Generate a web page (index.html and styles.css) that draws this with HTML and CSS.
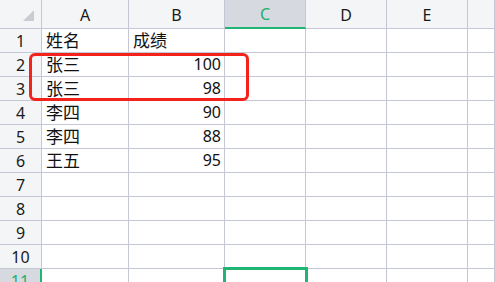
FILE: index.html
```html
<!DOCTYPE html>
<html lang="zh-CN">
<head>
    <meta charset="UTF-8" />
    <title>Sheet1</title>
    <link rel="stylesheet" href="styles.css">
</head>
<body>
    <div class="sheet">
        <div class="grid">
            <!-- header row -->
            <div class="hd corner">
                <svg width="12" height="12" viewBox="0 0 12 12"><polygon points="11,0 11,11 0,11" fill="#c9ccd2"/></svg>
            </div>
            <div class="hd col">A</div>
            <div class="hd col">B</div>
            <div class="hd col active">C</div>
            <div class="hd col">D</div>
            <div class="hd col">E</div>
            <div class="hd col"></div>

            <div class="hd row">1</div>
            <div class="cell cn">姓名</div><div class="cell cn">成绩</div><div class="cell"></div><div class="cell"></div><div class="cell"></div><div class="cell"></div>

            <div class="hd row">2</div>
            <div class="cell cn">张三</div><div class="cell num">100</div><div class="cell"></div><div class="cell"></div><div class="cell"></div><div class="cell"></div>

            <div class="hd row">3</div>
            <div class="cell cn">张三</div><div class="cell num">98</div><div class="cell"></div><div class="cell"></div><div class="cell"></div><div class="cell"></div>

            <div class="hd row">4</div>
            <div class="cell cn">李四</div><div class="cell num">90</div><div class="cell"></div><div class="cell"></div><div class="cell"></div><div class="cell"></div>

            <div class="hd row">5</div>
            <div class="cell cn">李四</div><div class="cell num">88</div><div class="cell"></div><div class="cell"></div><div class="cell"></div><div class="cell"></div>

            <div class="hd row">6</div>
            <div class="cell cn">王五</div><div class="cell num">95</div><div class="cell"></div><div class="cell"></div><div class="cell"></div><div class="cell"></div>

            <div class="hd row">7</div>
            <div class="cell"></div><div class="cell"></div><div class="cell"></div><div class="cell"></div><div class="cell"></div><div class="cell"></div>

            <div class="hd row">8</div>
            <div class="cell"></div><div class="cell"></div><div class="cell"></div><div class="cell"></div><div class="cell"></div><div class="cell"></div>

            <div class="hd row">9</div>
            <div class="cell"></div><div class="cell"></div><div class="cell"></div><div class="cell"></div><div class="cell"></div><div class="cell"></div>

            <div class="hd row">10</div>
            <div class="cell"></div><div class="cell"></div><div class="cell"></div><div class="cell"></div><div class="cell"></div><div class="cell"></div>

            <div class="hd row active">11</div>
            <div class="cell"></div><div class="cell"></div><div class="cell"></div><div class="cell"></div><div class="cell"></div><div class="cell"></div>
        </div>

        <!-- annotation + selection overlays -->
        <div class="mark"></div>
        <div class="selection"></div>
    </div>
</body>
</html>
```

FILE: styles.css
```css
/* Grundlayout */
* {
    box-sizing: border-box;
}
html, body {
    margin: 0;
    height: 100%;
    overflow: hidden;
    background: #fff;
}
body {
    font-family: "Noto Sans", "Noto Sans CJK SC", sans-serif;
    color: #111;
}

.sheet {
    position: relative;
    width: 495px;
    height: 282px;
    overflow: hidden;
}

/* Tabelle */
.grid {
    display: grid;
    grid-template-columns: 42px 87px 96px 81px 81px 81px 1fr;
    grid-template-rows: 29px repeat(11, 24px);
}
.grid > div {
    border-right: 1px solid #c4c8d6;
    border-bottom: 1px solid #c4c8d6;
}

/* Kopfzeilen */
.hd {
    background: #f4f5f7;
    font-size: 16px;
    display: flex;
    align-items: center;
    justify-content: center;
    color: #1a1a1a;
}
.hd.col {
    padding-top: 1px;
}
.hd.col.active {
    background: #d6d9df;
    color: #21b070;
    border-bottom: 2px solid #21b573;
}
.hd.row.active {
    background: #d6d9df;
    color: #21b070;
    border-right: 2px solid #21b573;
    align-items: flex-start;
    padding-top: 1px;
}
.corner {
    align-items: flex-start;
    justify-content: flex-end;
    padding: 10px 6px 0 0;
}
.corner svg {
    display: block;
}

/* Zellen */
.cell {
    font-size: 16px;
    line-height: 23px;
    padding: 0 3px 0 4px;
    white-space: nowrap;
    overflow: hidden;
}
.cell.cn {
    font-size: 17px;
}
.cell.num {
    text-align: right;
}

/* Markierung */
.mark {
    position: absolute;
    left: 29px;
    top: 53px;
    width: 220px;
    height: 48px;
    border: 3px solid #f3231b;
    border-radius: 6px;
}
.selection {
    position: absolute;
    left: 223px;
    top: 267px;
    width: 85px;
    height: 40px;
    border: 3px solid #21b573;
}
```
